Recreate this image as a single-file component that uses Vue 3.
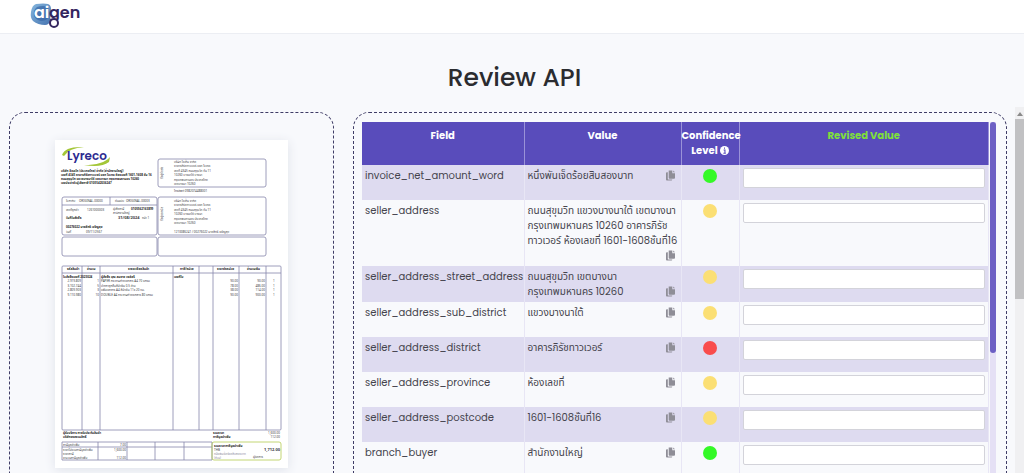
<script setup>
const rows = [
  { field: 'invoice_net_amount_word', lines: ['หนึ่งพันเจ็ดร้อยสิบสองบาท'], level: 'high' },
  {
    field: 'seller_address',
    lines: ['ถนนสุขุมวิท แขวงบางนาใต้ เขตบางนา', 'กรุงเทพมหานคร 10260 อาคารภิรัช', 'ทาวเวอร์ ห้องเลขที่ 1601-1608ชั้นที่16', ''],
    level: 'medium',
  },
  { field: 'seller_address_street_address', lines: ['ถนนสุขุมวิท เขตบางนา', 'กรุงเทพมหานคร 10260'], level: 'medium' },
  { field: 'seller_address_sub_district', lines: ['แขวงบางนาใต้'], level: 'medium' },
  { field: 'seller_address_district', lines: ['อาคารภิรัชทาวเวอร์'], level: 'low' },
  { field: 'seller_address_province', lines: ['ห้องเลขที่'], level: 'medium' },
  { field: 'seller_address_postcode', lines: ['1601-1608ชั้นที่16'], level: 'medium' },
  { field: 'branch_buyer', lines: ['สำนักงานใหญ่'], level: 'high' },
]

const address = ['บริษัท ไอเก็น จำกัด', 'อาคารภิรัชทาวเวอร์ แอท ไบเทค', 'เลขที่ 4345 ถนนสุขุมวิท ชั้น 11', '10260 บางนาใต้ บางนา', 'กรุงเทพมหานคร ประเทศไทย', 'เขตบางนา 10260']

const items = [
  { code: '2.919.809', qty: '1', name: 'PAPER กระดาษถ่ายเอกสาร A4 70 แกรม', price: '90.00', total: '90.00' },
  { code: '3.102.744', qty: '5', name: 'ปากกาลูกลื่นสีน้ำเงิน 0.5 ด้าม', price: '78.00', total: '486.00' },
  { code: '2.809.903', qty: '3', name: 'แฟ้มเอกสาร A4 สีน้ำเงิน 11x 20 ซม.', price: '38.00', total: '114.00' },
  { code: '9.110.980', qty: '10', name: 'DOUBLE A4 กระดาษถ่ายเอกสาร 80 แกรม', price: '90.00', total: '900.00' },
]
</script>

<template>
  <div class="page">
    <header class="topbar">
      <a class="brand" href="#" aria-label="aigen">
        <svg width="52" height="28" viewBox="0 0 52 28">
          <defs>
            <linearGradient id="blob" x1="0" y1="0" x2="1" y2="1">
              <stop offset="0" stop-color="#86b7de" />
              <stop offset="1" stop-color="#4573b0" />
            </linearGradient>
          </defs>
          <path d="M6 4Q14 3 18 4Q21 5 21 9L20 21Q19 25 15 25Q8 25 3 21Q0 18 1 12Q2 5 6 4Z" fill="url(#blob)" />
          <path d="M7 7Q13 5 18 7Q19 12 18 18Q16 21 11 21Q6 20 4 16Q3 10 7 7Z" fill="#3767a6" opacity=".7" />
          <text x="4" y="18" class="logo-ai">ai</text>
          <text x="19" y="18" class="logo-gen">gen</text>
          <circle cx="24" cy="23" r="4" fill="#fff" stroke="#34265f" stroke-width="2" />
        </svg>
      </a>
    </header>

    <h1>Review API</h1>

    <div class="workspace">
      <main class="panels">
        <section class="panel preview" aria-label="Invoice">
          <svg class="invoice" viewBox="0 0 233 328" role="img" aria-label="Lyreco invoice">
            <path d="M7 15Q10 6 29 7Q14 8 9 16Z" fill="#a3c637" />
            <path d="M29 25Q48 25 55 17L54 22Q46 28 29 25Z" fill="#a3c637" />
            <text x="12" y="20" class="lyreco">Lyreco</text>
            <g class="strong">
              <text x="6" y="32">บริษัท ลีเรคโก (ประเทศไทย) จำกัด (สำนักงานใหญ่)</text>
              <text x="6" y="36">เลขที่ 4345 อาคารภิรัชทาวเวอร์ แอท ไบเทค ห้องเลขที่ 1601-1608 ชั้น 16</text>
              <text x="6" y="40">ถนนสุขุมวิท แขวงบางนาใต้ เขตบางนา กรุงเทพมหานคร 10260</text>
              <text x="6" y="44">เลขประจำตัวผู้เสียภาษี 0105542036247</text>
            </g>
            <g class="frame">
              <rect x="103" y="19" width="108" height="28" rx="2" />
              <rect x="7" y="57" width="95" height="38" rx="2" />
              <rect x="103" y="57" width="108" height="38" rx="2" />
              <rect x="7" y="97" width="95" height="19" rx="2" />
              <rect x="103" y="97" width="108" height="19" rx="2" />
              <path d="M7 65H102M55 57V65" />
              <rect x="7" y="126" width="219" height="164" rx="1" />
              <path d="M7 133H226M27 126V290M45 126V290M118 126V290M144 126V290M158 126V290M184 126V290M211 126V290" />
              <path d="M7 302H157V320H7ZM43 302V320M72 302V320M100 302V320M129 302V320M7 307H157" />
              <rect x="157" y="302" width="69" height="18" rx="2" class="lime" />
            </g>
            <g>
              <text v-for="(line, i) in address" :key="'a' + i" x="119" :y="23 + i * 4.4">{{ line }}</text>
              <text x="119" y="52">โทรศัพท์ 0982074488001</text>
              <text v-for="(line, i) in address" :key="'b' + i" x="119" :y="62 + i * 4.4">{{ line }}</text>
              <text x="119" y="93">1210086241 / 00276022 นายสิทธิ เจริญสุข</text>
              <text transform="translate(108 39) rotate(-90)">ที่อยู่จัดส่ง</text>
              <text transform="translate(108 81) rotate(-90)">ที่อยู่ออกบิล</text>
              <text x="11" y="62">ใบกำกับ</text><text x="24" y="62">ORIGINAL-00000</text>
              <text x="60" y="62">ต้นฉบับ</text><text x="71" y="62">ORIGINAL-00003</text>
              <text x="11" y="71">เลขที่ลูกค้า</text><text x="32" y="71">1261000003</text>
              <text x="58" y="70">ผู้เสียภาษี</text><text x="76" y="70" class="strong">0105562163899</text>
              <text x="58" y="74">สำนักงานใหญ่</text>
              <text x="11" y="79" class="strong">วันที่ใบสั่งซื้อ</text><text x="63" y="79" class="date">31/08/2024</text><text x="87" y="79">หน้า 1</text>
              <text x="11" y="88" class="strong">00276022 นายสิทธิ เจริญสุข</text>
              <text x="11" y="93">วันที่</text><text x="31" y="93">09/11/2567</text>
            </g>
            <g class="strong">
              <text x="12" y="130">รหัสสินค้า</text><text x="32" y="130">จำนวน</text><text x="73" y="130">รายละเอียดสินค้า</text>
              <text x="125" y="130">ภาษี/หน่วย</text><text x="162" y="130">ราคาต่อหน่วย</text><text x="192" y="130">จำนวนเงิน</text>
            </g>
            <g class="strong">
              <text x="8" y="138">ใบสั่งซื้อเลขที่ 2023024</text><text x="46" y="138">ผู้สั่งซื้อ คุณ สมชาย วงศ์ศรี</text><text x="119" y="138">เลขที่ใบ</text>
            </g>
            <g v-for="(item, i) in items" :key="item.code" class="item">
              <text x="26" :y="142 + i * 4.5" text-anchor="end">{{ item.code }}</text>
              <text x="44" :y="142 + i * 4.5" text-anchor="end">{{ item.qty }}</text>
              <text x="46" :y="142 + i * 4.5">{{ item.name }}</text>
              <text x="183" :y="142 + i * 4.5" text-anchor="end">{{ item.price }}</text>
              <text x="210" :y="142 + i * 4.5" text-anchor="end">{{ item.total }}</text>
              <text x="218" :y="142 + i * 4.5">1</text>
            </g>
            <g class="strong">
              <text x="8" y="294">ผู้รับบริการ การรับประกันสินค้า</text><text x="8" y="298">บริษัทขอสงวนสิทธิ์</text>
              <text x="158" y="294">รวมราคา</text><text x="158" y="298">ภาษีมูลค่าเพิ่ม</text>
            </g>
            <g>
              <text x="225" y="294" text-anchor="end">1,600.00</text><text x="225" y="298" text-anchor="end">112.00</text>
              <text x="8" y="306">ภาษีมูลค่าเพิ่ม</text><text x="71" y="306" text-anchor="end">7.00</text>
              <text x="8" y="311">ราคาไม่รวมภาษีมูลค่าเพิ่ม</text><text x="71" y="311" text-anchor="end">1,600.00</text>
              <text x="8" y="315">ราคาภาษี</text>
              <text x="8" y="319">จำนวนภาษีมูลค่าเพิ่ม</text><text x="71" y="319" text-anchor="end">112.00</text>
              <text x="159" y="307" class="strong">รวมราคาภาษีมูลค่าเพิ่ม</text><text x="159" y="311">THB</text>
              <text x="159" y="315" class="faint">หนึ่งพันเจ็ดร้อยสิบสองบาท</text><text x="159" y="319" class="faint">(ถ้วน)</text>
              <text x="225" y="311" text-anchor="end" class="grand">1,712.00</text>
              <text x="198" y="318">ผู้จัดการ</text>
            </g>
          </svg>
        </section>

        <section class="panel review" aria-label="Review">
          <div class="table-wrap">
            <table>
              <colgroup>
                <col class="c-field" />
                <col class="c-value" />
                <col class="c-level" />
                <col />
              </colgroup>
              <thead>
                <tr>
                  <th scope="col">Field</th>
                  <th scope="col">Value</th>
                  <th scope="col">
                    Confidence<br />Level
                    <svg class="info" viewBox="0 0 10 10">
                      <circle cx="5" cy="5" r="5" fill="#fff" />
                      <path d="M4 4.5H5.5V8M3.7 8H6.5M4.4 2.4H5.6" stroke="#594cbb" stroke-width="1.2" fill="none" />
                    </svg>
                  </th>
                  <th scope="col" class="revised">Revised Value</th>
                </tr>
              </thead>
              <tbody>
                <tr v-for="row in rows" :key="row.field">
                  <td class="field">{{ row.field }}</td>
                  <td class="value">
                    <div class="value-box">
                      <div class="lines">
                        <div v-for="(line, i) in row.lines" :key="i" class="line">{{ line }}</div>
                      </div>
                      <button type="button" class="copy" :aria-label="'Copy ' + row.field">
                        <svg viewBox="0 0 10 11">
                          <path d="M3 0H7V3H10V8Q10 9 9 9H4Q3 9 3 8Z" fill="#8f8e97" />
                          <path d="M8 0L10 2H8Z" fill="#8f8e97" />
                          <path d="M0 3Q0 2 1 2H2V9Q2 10 3 10H7Q7 11 6 11H1Q0 11 0 10Z" fill="#8f8e97" />
                        </svg>
                      </button>
                    </div>
                  </td>
                  <td class="level"><span class="dot" :class="row.level"></span></td>
                  <td class="revise"><input type="text" :aria-label="'Revised value for ' + row.field" /></td>
                </tr>
              </tbody>
            </table>
          </div>
          <div class="table-scroll"><div class="table-thumb"></div></div>
        </section>
      </main>
      <div class="page-scroll">
        <svg viewBox="0 0 9 12"><path d="M2 9L5 5L8 9Z" fill="#8a8a8a" /></svg>
        <div class="page-thumb"></div>
      </div>
    </div>
  </div>
</template>

<style>
body {
  margin: 0;
  overflow: hidden;
}
</style>

<style scoped>
.page {
  height: 100vh;
  display: flex;
  flex-direction: column;
  overflow: hidden;
  background: #f8f9fc;
  color: #45444d;
  font-family: Poppins, Inter, "Noto Sans Thai", "Noto Sans", sans-serif;
  font-size: 10px;
  line-height: 15px;
}
.topbar {
  flex: none;
  height: 33px;
  background: #fff;
  border-bottom: 1px solid #eceef3;
}
.brand {
  display: block;
  width: 52px;
  margin-left: 30px;
}
.brand svg {
  display: block;
}
.logo-ai,
.logo-gen {
  font-weight: 600;
  font-size: 16px;
}
.logo-ai {
  fill: #fff;
}
.logo-gen {
  fill: #34265f;
}
h1 {
  flex: none;
  margin: 28px 0 0;
  padding-left: 5px;
  height: 45px;
  line-height: 32px;
  font-size: 25px;
  font-weight: 500;
  text-align: center;
  color: #2b2c30;
}
.workspace {
  flex: 1;
  min-height: 0;
  display: flex;
}
.panels {
  flex: 1;
  min-width: 0;
  display: grid;
  grid-template-columns: minmax(0, 325fr) minmax(0, 654fr);
  gap: 19px;
  padding: 5px 8px 0 9px;
  overflow: hidden;
}
.panel {
  box-sizing: border-box;
  border: 1px dashed #3f3c66;
  border-bottom: 0;
  border-radius: 16px 16px 0 0;
  overflow: hidden;
}
.preview {
  padding: 27px 45px 0;
}
.invoice {
  display: block;
  width: 100%;
  background: #fff;
  box-shadow: 0 2px 10px #dfe2ea;
  font-family: "Noto Sans Thai", "Noto Sans", sans-serif;
  font-size: 3px;
  fill: #3c3c44;
}
.lyreco {
  font-family: Poppins, Lato, sans-serif;
  font-size: 12px;
  font-weight: 600;
  fill: #2d2b90;
}
.strong {
  font-weight: 700;
  fill: #222;
}
.frame {
  fill: none;
  stroke: #8785ab;
  stroke-width: 0.8;
}
.lime {
  stroke: #b4cc50;
}
.date {
  font-size: 4px;
  font-weight: 700;
}
.grand {
  font-size: 4px;
  font-weight: 700;
}
.faint {
  fill: #8a8a9a;
}
.review {
  display: flex;
  align-items: flex-start;
  padding: 9px 10px 0 8px;
}
.table-wrap {
  flex: 1;
  min-width: 0;
}
table {
  width: 100%;
  table-layout: fixed;
  border-collapse: collapse;
}
.c-field {
  width: 162px;
}
.c-value {
  width: 157px;
}
.c-level {
  width: 58px;
}
th {
  height: 43px;
  box-sizing: border-box;
  padding: 6px 0;
  vertical-align: top;
  background: #594cbb;
  color: #fff;
  font-weight: 700;
  white-space: nowrap;
  border-right: 1px solid #9a92d8;
}
.revised {
  color: #7fe03a;
}
.info {
  width: 9px;
  height: 9px;
  vertical-align: -1px;
}
td {
  height: 35px;
  box-sizing: border-box;
  padding: 3px;
  vertical-align: top;
  border-right: 1px solid #e8e6f5;
}
tbody tr:nth-child(odd) {
  background: #dedbf0;
}
.field {
  white-space: nowrap;
}
.value {
  padding-right: 6px;
}
.value-box {
  display: flex;
  align-items: flex-end;
}
.lines {
  flex: 1;
  min-width: 0;
}
.line {
  height: 15px;
  white-space: nowrap;
}
.copy {
  flex: none;
  width: 9px;
  height: 15px;
  padding: 0;
  border: 0;
  background: none;
}
.copy svg {
  display: block;
  width: 9px;
  height: 11px;
}
.level {
  text-align: center;
}
.dot {
  display: block;
  width: 14px;
  height: 14px;
  margin: 1px auto 0;
  border-radius: 50%;
}
.high {
  background: #34f927;
}
.medium {
  background: #fbdf74;
}
.low {
  background: #f94c4c;
}
input {
  display: block;
  box-sizing: border-box;
  width: 100%;
  height: 20px;
  padding: 0 4px;
  border: 1px solid #d3d3da;
  border-radius: 2px;
  background: #fff;
  font: inherit;
}
.table-scroll {
  flex: none;
  width: 6px;
  height: 400px;
  margin-left: 1px;
  background: #e5e0f5;
}
.table-thumb {
  height: 231px;
  border-radius: 3px;
  background: #6c5fc4;
}
.page-scroll {
  flex: none;
  width: 9px;
  background: #f0f0f2;
}
.page-scroll svg {
  display: block;
  width: 9px;
  height: 12px;
}
.page-thumb {
  height: 180px;
  background: #c1c1c3;
}
</style>
